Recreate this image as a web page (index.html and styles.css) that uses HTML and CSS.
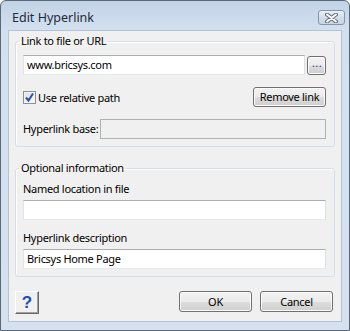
FILE: index.html
```html
<!DOCTYPE html>
<html lang="en">
<head>
    <meta charset="UTF-8">
    <title>Edit Hyperlink</title>
    <link rel="stylesheet" href="styles.css">
</head>
<body>
    <div class="window">
        <div class="titlebar">
            <span class="title">Edit Hyperlink</span>
            <span class="close-btn">
                <svg width="13" height="10" viewBox="0 0 13 10">
                    <path d="M2 1.5 L11 8.5 M11 1.5 L2 8.5" stroke="#5f6b7a" stroke-width="4" stroke-linecap="round"/>
                    <path d="M2 1.5 L11 8.5 M11 1.5 L2 8.5" stroke="#ffffff" stroke-width="2" stroke-linecap="round"/>
                </svg>
            </span>
        </div>
        <div class="client">
            <fieldset class="group">
                <legend>Link to file or URL</legend>
                <div class="row">
                    <div class="input">www.bricsys.com</div>
                    <div class="btn browse-btn">...</div>
                </div>
                <div class="row row-space">
                    <div class="check">
                        <span class="checkbox">
                            <svg width="11" height="11" viewBox="0 0 11 11">
                                <path d="M2 5.5 L4.5 8.5 L9 1.5" fill="none" stroke="#2a4fa8" stroke-width="2"/>
                            </svg>
                        </span>
                        <span>Use relative path</span>
                    </div>
                    <div class="btn remove-btn">Remove link</div>
                </div>
                <div class="row row-space">
                    <span class="field-label">Hyperlink base:</span>
                    <div class="input input-disabled"></div>
                </div>
            </fieldset>
            <fieldset class="group group-optional">
                <legend>Optional information</legend>
                <div class="stack-label">Named location in file</div>
                <div class="input"></div>
                <div class="stack-label stack-label-next">Hyperlink description</div>
                <div class="input">Bricsys Home Page</div>
            </fieldset>
            <div class="footer">
                <div class="help-btn">?</div>
                <div class="btn dialog-btn">OK</div>
                <div class="btn dialog-btn">Cancel</div>
            </div>
        </div>
    </div>
</body>
</html>
```

FILE: styles.css
```css
body {
    margin: 0;
    padding: 0;
    font-family: "Noto Sans", "Open Sans", sans-serif;
    font-size: 11px;
    letter-spacing: -0.3px;
    color: #000;
    background: #fff;
}
.window {
    width: 350px;
    height: 331px;
    box-sizing: border-box;
    border: 1px solid #5a6878;
    border-radius: 6px 6px 0 0;
    background: linear-gradient(#c2d3e7, #d3e0ef 30px, #d5e1ef);
    padding: 0 7px 8px;
    display: flex;
    flex-direction: column;
}
.titlebar {
    height: 29px;
    display: flex;
    align-items: flex-start;
    justify-content: space-between;
}
.title {
    padding: 9px 0 0 4px;
    line-height: 15px;
    font-size: 12.5px;
    letter-spacing: 0;
    color: #1e2b3b;
}
.close-btn {
    margin: 9px -3px 0 0;
    width: 27px;
    height: 15px;
    box-sizing: border-box;
    border: 1px solid #8595ad;
    border-radius: 3px;
    background: linear-gradient(#eaf0f7, #d4deea 50%, #c9d5e4);
    display: flex;
    align-items: center;
    justify-content: center;
}
.client {
    flex: 1;
    background: #f0f0f0;
    border: 1px solid #b3c3d7;
    display: flex;
    flex-direction: column;
}
.group {
    margin: 3px 6px 0;
    padding: 7px 8px 7px 7px;
    border: 1px solid #d5dfe5;
    border-radius: 3px;
    box-shadow: inset 1px 1px 0 #fff;
}
.group legend {
    margin-left: -4px;
    padding: 0 2px;
    line-height: 14px;
}
.group-optional {
    margin-top: 14px;
}
.row {
    display: flex;
    align-items: center;
}
.row-space {
    margin-top: 12px;
}
.input {
    flex: 1;
    height: 20px;
    box-sizing: border-box;
    background: #fff;
    border: 1px solid #abadb3;
    border-color: #abadb3 #dbdfe6 #e3e9ef #e2e3ea;
    padding: 0 3px;
    line-height: 18px;
}
.input-disabled {
    background: #f0f0f0;
    border-color: #adb2b5;
}
.btn {
    box-sizing: border-box;
    border: 1px solid #707070;
    border-radius: 3px;
    background: linear-gradient(#f2f2f2, #ebebeb 50%, #dddddd 50%, #cfcfcf);
    box-shadow: inset 0 0 0 1px #fbfbfb;
    text-align: center;
}
.browse-btn {
    width: 19px;
    height: 19px;
    margin-left: 2px;
    padding-left: 1px;
    line-height: 11px;
    color: #2c2c8c;
    letter-spacing: 0.4px;
}
.check {
    flex: 1;
    display: flex;
    align-items: center;
}
.checkbox {
    width: 13px;
    height: 13px;
    box-sizing: border-box;
    border: 1px solid #8e8f8f;
    background: linear-gradient(135deg, #dedede, #fbfbfb);
    box-shadow: inset 0 0 0 1px #f4f4f4;
    margin-right: 2px;
    display: flex;
    align-items: center;
    justify-content: center;
}
.remove-btn {
    width: 73px;
    height: 20px;
    line-height: 18px;
}
.field-label {
    flex-shrink: 0;
    width: 77px;
    white-space: nowrap;
    line-height: 14px;
}
.stack-label {
    line-height: 14px;
    margin-bottom: 4px;
}
.stack-label-next {
    margin-top: 11px;
}
.footer {
    margin: 14px 8px 0 6px;
    display: flex;
    align-items: flex-start;
    gap: 8px;
}
.help-btn {
    width: 24px;
    height: 23px;
    box-sizing: border-box;
    border: 1px solid;
    border-color: #fff #696969 #696969 #fff;
    box-shadow: inset -1px -1px 0 #a0a0a0;
    background: #f0f0f0;
    margin-right: auto;
    text-align: center;
    font-family: "Liberation Sans", sans-serif;
    font-weight: bold;
    font-size: 17px;
    line-height: 21px;
    letter-spacing: 0;
    color: #1d4fa8;
}
.dialog-btn {
    width: 73px;
    height: 21px;
    line-height: 19px;
}
```
